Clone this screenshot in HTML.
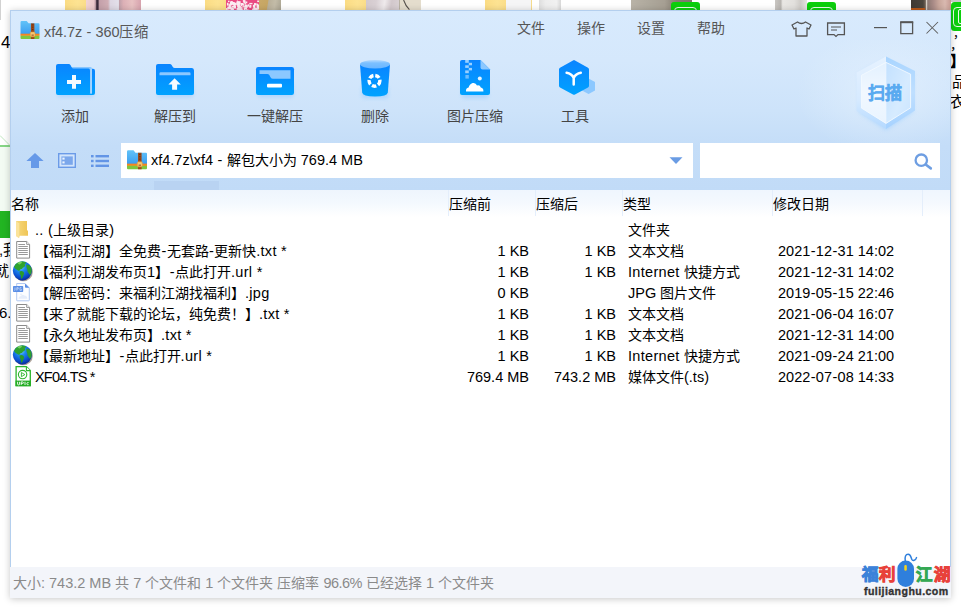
<!DOCTYPE html>
<html lang="zh-CN">
<head>
<meta charset="utf-8">
<title>xf4.7z - 360压缩</title>
<style>
*{box-sizing:border-box;margin:0;padding:0}
html,body{width:961px;height:607px;overflow:hidden;background:#fff}
body{position:relative;font-family:"Liberation Sans",sans-serif;font-size:14px;color:#000}
.abs,.t{position:absolute}
.t{white-space:nowrap;line-height:20px;height:20px}
.c{display:inline-block;white-space:nowrap;vertical-align:baseline;text-align:justify;text-align-last:justify;text-justify:inter-character}
.a{font-size:14.5px}
.h{display:inline-block;width:5.6px;text-align:center}
.n .a{letter-spacing:.3px}
.n .h{letter-spacing:0}
.x .a{letter-spacing:-.8px}
.r{text-align:right}
#win{position:absolute;left:10px;top:10px;width:941px;height:588px;background:linear-gradient(#d8eafd 0,#d5e8fc 50px,#cde3fa 100px,#c4ddf8 135px,#c1dbf7 180px);background-size:100% 180px;background-repeat:no-repeat;background-color:#c1dbf7;border:1px solid #b4cfee;box-shadow:0 1px 7px rgba(0,0,0,.22)}
</style>
</head>
<body>

<!-- desktop background fragments -->
<div class="abs" style="left:0px;top:0px;width:1px;height:20px;background:#d2d2d2;"></div>
<div class="abs" style="left:65px;top:0px;width:21px;height:9.6px;background:linear-gradient(90deg,#fbdc84,#fde392 60%,#fbdd88);"></div>
<div class="abs" style="left:205px;top:0px;width:21px;height:9.6px;background:linear-gradient(90deg,#fbdc84,#fde392 60%,#fbdd88);"></div>
<div class="abs" style="left:345px;top:0px;width:21px;height:9.6px;background:linear-gradient(90deg,#fbdc84,#fde392 60%,#fbdd88);"></div>
<div class="abs" style="left:485px;top:0px;width:21px;height:9.6px;background:linear-gradient(90deg,#fbdc84,#fde392 60%,#fbdd88);"></div>
<div class="abs" style="left:86px;top:0px;width:55px;height:9.6px;background:linear-gradient(90deg,#f1d3d3 0,#ecc9cc 14%,#c9a5ae 17%,#3d2c3c 19.5%,#3d2c3c 22%,#c4a0aa 24%,#d0aeb5 40%,#ddd6e2 44%,#e3e0ea 59%,#bfa0aa 60.5%,#dcb0b6 68%,#e8c2c3 84%,#d7a3ae 100%);"></div>
<div class="abs" style="left:226px;top:0px;width:33px;height:9.6px;background:#ea4a82;"></div>
<svg class="abs" style="left:226px;top:0" width="33" height="9.6" viewBox="226 0 33 9.6"><g fill="#fff" opacity=".9"><rect x="236.4" y="1.5" width="2.4" height="1.2"/><rect x="243.1" y="3.7" width="1.1" height="2.1"/><rect x="227.2" y="4.3" width="1.2" height="1.2"/><rect x="239.6" y="8.3" width="1.3" height="1.5"/><rect x="246.1" y="9.5" width="2.3" height="1.9"/><rect x="257.2" y="0.5" width="2.9" height="1.6"/><rect x="230.6" y="1.2" width="1.7" height="2.8"/><rect x="231.8" y="5.8" width="2.4" height="1.8"/><rect x="243.5" y="0.6" width="1.1" height="1.5"/><rect x="247.8" y="4.3" width="1.7" height="2.3"/><rect x="240.5" y="3.0" width="2.7" height="2.5"/><rect x="233.8" y="5.7" width="2.2" height="2.9"/><rect x="249.3" y="2.9" width="3.2" height="1.3"/><rect x="239.4" y="7.6" width="1.3" height="2.1"/><rect x="227.3" y="6.7" width="2.7" height="2.3"/><rect x="254.0" y="3.1" width="2.5" height="2.3"/><rect x="244.6" y="4.6" width="2.8" height="3.1"/><rect x="241.2" y="6.6" width="1.1" height="2.5"/><rect x="246.7" y="9.9" width="2.8" height="1.6"/><rect x="238.3" y="6.7" width="1.0" height="2.0"/><rect x="231.4" y="1.2" width="1.1" height="2.7"/><rect x="230.1" y="2.5" width="1.9" height="2.9"/><rect x="228.6" y="4.5" width="2.2" height="2.9"/><rect x="252.2" y="8.6" width="1.6" height="1.9"/><rect x="237.5" y="8.8" width="3.1" height="1.3"/><rect x="231.6" y="2.3" width="1.5" height="2.1"/><rect x="244.9" y="2.6" width="1.0" height="1.9"/><rect x="237.8" y="5.7" width="3.1" height="2.5"/><rect x="242.5" y="6.2" width="2.5" height="1.1"/><rect x="254.8" y="7.8" width="2.9" height="2.8"/><rect x="238.6" y="4.0" width="1.2" height="2.4"/><rect x="228.0" y="0.7" width="1.5" height="1.4"/><rect x="236.9" y="0.5" width="1.0" height="1.3"/><rect x="229.2" y="3.6" width="1.1" height="2.9"/><rect x="245.7" y="1.5" width="1.6" height="1.8"/><rect x="237.7" y="1.2" width="2.9" height="3.2"/><rect x="240.9" y="4.8" width="1.2" height="1.2"/><rect x="237.0" y="2.6" width="2.8" height="1.4"/><rect x="226.7" y="9.5" width="2.2" height="1.3"/><rect x="243.4" y="0.3" width="2.2" height="3.2"/><rect x="253.6" y="7.0" width="1.6" height="1.8"/><rect x="231.3" y="7.7" width="2.2" height="2.7"/><rect x="236.5" y="2.2" width="2.8" height="3.2"/><rect x="253.3" y="8.1" width="2.8" height="2.6"/><rect x="233.3" y="5.2" width="1.8" height="1.1"/><rect x="226.9" y="2.8" width="1.6" height="2.5"/><rect x="256.6" y="4.5" width="3.1" height="3.2"/><rect x="256.6" y="3.6" width="1.5" height="1.5"/><rect x="232.3" y="2.0" width="2.4" height="3.0"/><rect x="252.9" y="4.8" width="2.4" height="2.8"/><rect x="228.7" y="6.6" width="3.0" height="2.7"/><rect x="250.0" y="4.8" width="1.4" height="2.7"/><rect x="236.6" y="8.0" width="3.1" height="1.9"/><rect x="238.8" y="9.5" width="2.6" height="1.4"/><rect x="230.1" y="1.5" width="3.0" height="2.8"/><rect x="230.7" y="8.3" width="3.2" height="2.4"/><rect x="237.2" y="5.5" width="1.3" height="1.0"/><rect x="257.1" y="6.5" width="2.2" height="3.1"/><rect x="239.9" y="8.7" width="2.8" height="1.5"/><rect x="234.1" y="2.9" width="1.5" height="2.3"/><rect x="234.3" y="4.2" width="1.3" height="3.0"/><rect x="237.3" y="4.6" width="2.3" height="3.0"/><rect x="239.5" y="9.2" width="2.1" height="2.2"/><rect x="242.8" y="0.2" width="2.0" height="1.4"/><rect x="226.1" y="8.0" width="1.4" height="2.0"/><rect x="249.2" y="5.6" width="1.7" height="2.1"/><rect x="243.8" y="7.8" width="1.2" height="2.2"/><rect x="234.0" y="2.8" width="2.7" height="2.1"/><rect x="244.0" y="7.6" width="3.0" height="2.0"/><rect x="245.6" y="5.1" width="2.1" height="2.5"/></g></svg>
<div class="abs" style="left:259px;top:0px;width:22px;height:9.6px;background:linear-gradient(100deg,#c9a968 0,#c7a663 38%,#b9b09a 42%,#c3bca8 70%,#aaa492 100%);"></div>
<div class="abs" style="left:366px;top:0px;width:33px;height:9.6px;background:linear-gradient(100deg,#d3c9cd 0,#d9d0d4 30%,#efeaec 55%,#d2c8cc 75%,#dad2d5 100%);"></div>
<div class="abs" style="left:399px;top:0px;width:22px;height:9.6px;background:#e4ddcd;"></div>
<svg class="abs" style="left:399px;top:0" width="22" height="9.6" viewBox="399 0 22 9.6"><path d="M403.6 0 Q405.6 6 409.4 9.6" stroke="#55504c" stroke-width="1.1" fill="none"/><rect x="399" y="0" width="1" height="9.6" fill="#b9b2a4"/></svg>
<div class="abs" style="left:506px;top:0px;width:25px;height:9.6px;background:#f5f5f6;"></div>
<div class="abs" style="left:531px;top:0px;width:1px;height:9.6px;background:#f6dc8e;"></div>
<div class="abs" style="left:539px;top:0px;width:21.5px;height:9.6px;background:linear-gradient(90deg,#dedede,#ededed 30%,#f1f1f1 80%,#d8d8d8);"></div>
<div class="abs" style="left:631px;top:0px;width:61px;height:9.6px;background:linear-gradient(90deg,#b9b3a7 0,#aea89c 30%,#a69f93 55%,#857d72 75%,#7d756b 100%);"></div>
<div class="abs" style="left:671px;top:2px;width:29px;height:10px;background:#0ccf0c;border-radius:3px 3px 0 0"></div>
<div class="abs" style="left:674px;top:7px;width:23px;height:8px;background:transparent;border:1.4px solid #e9fbe9;border-radius:4px"></div>
<div class="abs" style="left:775px;top:0px;width:32px;height:9.6px;background:linear-gradient(90deg,#c9c6c2 0,#b9b6b2 18%,#e9e7e4 24%,#e2e0dd 60%,#cfccc8 80%,#e6e4e2 100%);"></div>
<div class="abs" style="left:807px;top:2px;width:29px;height:10px;background:#0ccf0c;border-radius:3px 3px 0 0"></div>
<div class="abs" style="left:810px;top:7px;width:23px;height:8px;background:transparent;border:1.4px solid #e9fbe9;border-radius:4px"></div>
<div class="abs" style="left:911px;top:0px;width:40px;height:9.6px;background:linear-gradient(90deg,#3f3a34 0,#4a443c 30%,#6f6256 36%,#e9e2d8 38%,#8d7a74 42%,#a88a86 55%,#c9a79c 70%,#d9b9b0 85%,#c59a92 100%);"></div>
<div class="abs" style="left:911px;top:7.6px;width:14px;height:2px;background:#b8581a;"></div>
<div class="abs" style="left:951px;top:0px;width:10px;height:2px;background:#c8c8c8;"></div>
<div class="abs" style="left:951px;top:2px;width:14px;height:29px;background:#0ccf0c;border-radius:3.5px"></div>
<div class="abs" style="left:953px;top:6.5px;width:14px;height:20px;background:transparent;border:1.6px solid #e9fbe9;border-radius:4px"></div>
<div class="abs" style="left:958px;top:9px;width:8px;height:15px;background:transparent;border:1.4px solid #e9fbe9;border-radius:2px"></div>
<div class="abs" style="left:0px;top:145px;width:10px;height:1.6px;background:#86d686;"></div>
<div class="abs" style="left:0px;top:146.6px;width:10px;height:65px;background:#f3fbf3;"></div>
<svg class="abs" style="left:0;top:130px" width="10" height="16" viewBox="0 0 10 16"><path d="M0 5.5 L10 15.5" stroke="#bfe6bf" stroke-width="1" fill="none"/></svg>
<div class="abs" style="left:0px;top:211px;width:10px;height:27px;background:#22b522;"></div>
<div class="t" style="left:1px;top:33px;font-size:17px;">4</div>
<div class="t" style="left:-1px;top:240px;font-size:15px;">,我</div>
<div class="t" style="left:-6px;top:261px;font-size:15px;">就</div>
<div class="t" style="left:-1px;top:303px;font-size:15px;">6.</div>
<div class="t" style="left:950px;top:35px;font-size:13px;">，</div>
<div class="t" style="left:953px;top:24px;font-size:12px;">，</div>
<div class="t" style="left:950px;top:52px;font-size:15px;font-weight:bold">】</div>
<div class="t" style="left:951.5px;top:72px;font-size:15px;">品</div>
<div class="t" style="left:950px;top:92px;font-size:15px;">衣</div>
<div id="win"></div>
<svg class="abs" style="left:20px;top:21px" width="20" height="18" viewBox="0 0 20 19"><defs><linearGradient id="zf20" x1="0" y1="0" x2="0" y2="1"><stop offset="0" stop-color="#62c3f8"/><stop offset="1" stop-color="#3a9df0"/></linearGradient></defs><path d="M0 1.2 Q0 0 1.2 0 H6.5 L8.5 2.5 H19 Q20 2.5 20 3.5 V14 H0 Z" fill="url(#zf20)"/><rect x="0" y="13.4" width="20" height="2.3" fill="#f5861f"/><path d="M0 15.6 H20 V18 Q20 19 19 19 H1 Q0 19 0 18 Z" fill="#7ec63f"/><rect x="11" y="2.5" width="3.6" height="16.5" fill="#9a4a1c"/><rect x="12" y="3.6" width="1.6" height="1" fill="#6d2f0d"/><rect x="12" y="6" width="1.6" height="1" fill="#6d2f0d"/><rect x="12" y="8.4" width="1.6" height="1" fill="#6d2f0d"/><rect x="10.3" y="11.6" width="5" height="5" rx="1" fill="#f7c873" stroke="#e39a35" stroke-width=".6"/><rect x="11.6" y="14.4" width="2.4" height="1" fill="#8a4a1c"/></svg>
<div class="t" style="left:44px;top:21px;color:#585858;font-size:14.4px;line-height:22px;height:22px;letter-spacing:-.1px"><span class="a">xf4.7z <span class="h">-</span> 360</span><span class="c" style="width:28.8px">压缩</span></div>
<div class="t" style="left:517px;top:18px;color:#555"><span class="c" style="width:28px">文件</span></div>
<div class="t" style="left:577px;top:18px;color:#555"><span class="c" style="width:28px">操作</span></div>
<div class="t" style="left:637px;top:18px;color:#555"><span class="c" style="width:28px">设置</span></div>
<div class="t" style="left:697px;top:18px;color:#555"><span class="c" style="width:28px">帮助</span></div>
<svg class="abs" style="left:788px;top:18px" width="156" height="22" viewBox="788 18 156 22" fill="none" stroke="#555" stroke-width="1.3"><path d="M797.5 22 L792 25 L794 29 L796 28 V36 H807 V28 L809 29 L811 25 L805.5 22 Q801.5 25 797.5 22 Z" stroke-linejoin="round"/><path d="M827.6 23 H844.4 V34.6 H838 L836 36.4 L834 34.6 H827.6 Z"/><path d="M831 27 H841 M831 30 H837" stroke-width="1.1"/><path d="M874 27.6 H887" stroke-width="1.2"/><path d="M900.8 22.4 H912.6 V33.6 H900.8 Z"/><path d="M900.2 22.2 H913.2" stroke-width="2"/><path d="M926.5 22 L938 33.5 M938 22 L926.5 33.5" stroke-width="1.05" stroke="#5e5e5e"/></svg>
<svg width="0" height="0" style="position:absolute"><defs><linearGradient id="gb" x1="0" y1="0" x2="0" y2="1"><stop offset="0" stop-color="#0a84ff"/><stop offset="1" stop-color="#00a2ff"/></linearGradient><linearGradient id="gb2" x1="0" y1="0" x2="0" y2="1"><stop offset="0" stop-color="#1a8cff"/><stop offset="1" stop-color="#0aa5ff"/></linearGradient><linearGradient id="gh" x1="0" y1="0" x2="1" y2="0"><stop offset="0" stop-color="#e9f4ff"/><stop offset=".5" stop-color="#f4faff"/><stop offset=".5" stop-color="#d3eaff"/><stop offset="1" stop-color="#c4e2ff"/></linearGradient><filter id="sh" x="-20%" y="-20%" width="140%" height="160%"><feGaussianBlur stdDeviation="2"/></filter></defs></svg>
<svg class="abs" style="left:50px;top:56px" width="52" height="50" viewBox="50 56 52 50"><rect x="58" y="84" width="35" height="13" fill="#7fbfff" opacity=".45" filter="url(#sh)"/><path d="M88 68.7 H93 Q95 68.7 95 70.7 V93 Q95 95 93 95 H88 Z" fill="url(#gb)"/><path d="M70 67 H90.2 Q92 67 92 68.8 V93.4 H70 Z" fill="#86c5ff"/><path d="M90.4 68.6 H91.9 V93.4 H90.4 Z" fill="#a9d7ff"/><path d="M56 66 Q56 64 58 64 H68.5 Q70 64 70.6 65.3 L71.6 67.2 Q72.2 68.4 73.6 68.4 H88.5 Q90 68.4 90 70.4 V93 Q90 95 88 95 H58 Q56 95 56 93 Z" fill="url(#gb)"/><path d="M67 82 H81 M74 75 V88.8" stroke="#f4faff" stroke-width="4"/></svg>
<svg class="abs" style="left:150px;top:56px" width="52" height="50" viewBox="150 56 52 50"><rect x="158" y="84" width="35" height="13" fill="#7fbfff" opacity=".45" filter="url(#sh)"/><path d="M156 66 Q156 64 158 64 H169.6 Q171.2 64 171.8 65.2 L172.8 66.9 Q173.4 68 174.8 68 H192 Q194 68.4 194 70.4 V93 Q194 95 192 95 H158 Q156 95 156 93 Z" fill="url(#gb)"/><path d="M159.5 75.3 V73.4 Q159.5 72.2 160.7 72.2 H189.3 Q190.5 72.2 190.5 73.4 V75.3 Z" fill="#8cc8ff"/><path d="M174.6 78.2 L180.8 84.6 H177.1 V89.8 H172.1 V84.6 H168.4 Z" fill="#f6fbff"/></svg>
<svg class="abs" style="left:250px;top:56px" width="52" height="50" viewBox="250 56 52 50"><rect x="258" y="84" width="35" height="13" fill="#7fbfff" opacity=".45" filter="url(#sh)"/><rect x="256" y="67" width="38" height="28" rx="2.2" fill="url(#gb)"/><path d="M259.5 70.3 H290.5 V78.8 H273 Q271.3 78.8 270.5 77.3 L269.3 75.1 Q268.6 74 267.2 74 H259.5 Z" fill="#8cc8ff"/><rect x="267" y="83.8" width="15" height="3.8" rx="1" fill="#fff"/></svg>
<svg class="abs" style="left:350px;top:54px" width="52" height="52" viewBox="350 54 52 52"><defs><linearGradient id="tr" x1="0" y1="0" x2="0" y2="1"><stop offset="0" stop-color="#a6d4ff" stop-opacity=".7"/><stop offset=".35" stop-color="#7cc0ff"/><stop offset="1" stop-color="#6ab6ff"/></linearGradient></defs><rect x="362" y="86" width="26" height="12" fill="#7fbfff" opacity=".45" filter="url(#sh)"/><path d="M360 64.4 L362.2 92.4 Q362.6 96.4 375 96.4 Q387.4 96.4 387.8 92.4 L390 64.4 Z" fill="url(#gb)"/><ellipse cx="375" cy="64.2" rx="15" ry="4.2" fill="url(#tr)"/><g fill="none" stroke="#fff" stroke-width="3.4" stroke-dasharray="4.5 1.9"><circle cx="374.5" cy="80.8" r="5.4"/></g></svg>
<svg class="abs" style="left:450px;top:54px" width="52" height="52" viewBox="450 54 52 52"><rect x="462" y="86" width="26" height="12" fill="#7fbfff" opacity=".45" filter="url(#sh)"/><path d="M460 62 Q460 60 462 60 H480.5 L490 69.5 V93 Q490 95 488 95 H462 Q460 95 460 93 Z" fill="url(#gb)"/><path d="M480.5 60 L490 69.5 H482.5 Q480.5 69.5 480.5 67.5 Z" fill="#8cc8ff"/><g fill="#9ad0ff"><rect x="465.2" y="60" width="3.6" height="2.8"/><rect x="468.8" y="62.8" width="3.2" height="2.5"/><rect x="465.2" y="65.3" width="3.6" height="2.6"/><rect x="468.8" y="67.9" width="3.2" height="2.5"/><rect x="465.2" y="70.4" width="3.6" height="2.8"/><rect x="465.4" y="75" width="3.4" height="3.6" opacity=".7"/></g><circle cx="479.8" cy="78.6" r="2" fill="#e6f4ff"/><path d="M466 91.5 Q465.6 88.2 468.6 87.6 Q469.4 84 472.6 83 Q475.8 82.4 477 85.4 Q480 84.6 480.8 87.6 Q483.6 88 483.4 91.5 Z" fill="#fff"/></svg>
<svg class="abs" style="left:550px;top:54px" width="52" height="52" viewBox="550 54 52 52"><path d="M588.6 78.4 L595 82 V90.4 L588.6 94 L582 90.4 Z" fill="#8cc8ff"/><path d="M573 60.4 Q574 59.8 575 60.4 L588 67.8 Q589 68.4 589 69.6 V85.7 Q589 86.9 588 87.5 L575 94.4 Q574 95 573 94.4 L560 87.5 Q559 86.9 559 85.7 V69.6 Q559 68.4 560 67.8 Z" fill="url(#gb)"/><path d="M566.6 72.8 Q571.6 73.8 573.7 77.8 Q575.8 73.8 580.8 72.8 M573.7 77 V84.4" fill="none" stroke="#fff" stroke-width="2.5" stroke-linecap="round"/></svg>
<div class="t" style="left:61px;top:106px;color:#444"><span class="c" style="width:28px">添加</span></div>
<div class="t" style="left:154px;top:106px;color:#444"><span class="c" style="width:42px">解压到</span></div>
<div class="t" style="left:247px;top:106px;color:#444"><span class="c" style="width:56px">一键解压</span></div>
<div class="t" style="left:361px;top:106px;color:#444"><span class="c" style="width:28px">删除</span></div>
<div class="t" style="left:447px;top:106px;color:#444"><span class="c" style="width:56px">图片压缩</span></div>
<div class="t" style="left:561px;top:106px;color:#444"><span class="c" style="width:28px">工具</span></div>
<div class="abs" style="left:786px;top:40px;width:164px;height:110px;background:radial-gradient(ellipse 90px 62px at 100px 53px,rgba(235,245,255,.55),rgba(235,245,255,0));"></div>
<svg class="abs" style="left:846px;top:48px" width="80" height="92" viewBox="846 48 80 92"><defs><linearGradient id="hl" x1="0" y1="0" x2="0" y2="1"><stop offset="0" stop-color="#e6f2ff"/><stop offset=".6" stop-color="#d6eaff"/><stop offset="1" stop-color="#b4d9ff"/></linearGradient><linearGradient id="hr" x1="0" y1="0" x2="0" y2="1"><stop offset="0" stop-color="#a9d5ff"/><stop offset=".5" stop-color="#bfdfff"/><stop offset="1" stop-color="#a6d2ff"/></linearGradient><linearGradient id="il" x1="0" y1="0" x2="0" y2="1"><stop offset="0" stop-color="#e3f1ff"/><stop offset=".5" stop-color="#f1f8ff"/><stop offset="1" stop-color="#e9f4ff"/></linearGradient><linearGradient id="ir" x1="0" y1="0" x2="1" y2="1"><stop offset="0" stop-color="#c3e1ff"/><stop offset=".6" stop-color="#d6ebff"/><stop offset="1" stop-color="#c9e4ff"/></linearGradient></defs><path d="M886 60 L913 74 V112 L886 130 L859 112 V74 Z" fill="#8cc6ff" opacity=".5" filter="url(#sh)"/><path d="M886 56.6 L856.6 72.6 V110.8 L886 129 Z" fill="url(#hl)"/><path d="M886 56.6 L915 71 V110.4 L886 129 Z" fill="url(#hr)"/><path d="M886 62.4 L861.4 75.4 V108 L886 123.4 Z" fill="url(#il)"/><path d="M886 62.4 L910.6 74.2 V107.8 L886 123.4 Z" fill="url(#ir)"/><path d="M886 62.4 L910.6 74.2 V107.8 L886 123.4 L861.4 108 V75.4 Z" fill="none" stroke="#f3f9ff" stroke-width=".9"/><path d="M886 62.4 V123.4" stroke="#eef7ff" stroke-width=".6"/></svg>
<div class="t" style="left:868px;top:83px;color:#5aaaf0;font-size:17px;font-weight:bold;line-height:22px;height:22px;-webkit-text-stroke:.4px #5aaaf0">扫描</div>
<div class="abs" style="left:154px;top:181px;width:65px;height:9px;background:#b9d3f2;"></div>
<svg class="abs" style="left:24px;top:150px" width="90" height="20" viewBox="24 150 90 20"><path d="M35 153 L43.6 161 H39 V168 H31 V161 H26.4 Z" fill="#6699e8"/><rect x="58.7" y="153.7" width="16.6" height="13.6" fill="#d3e5fb" stroke="#6b9be8" stroke-width="1.4"/><rect x="61.4" y="156.4" width="11.4" height="8.4" fill="#7ba7eb"/><rect x="62.4" y="157.6" width="2.2" height="2" fill="#eef5ff"/><rect x="62.4" y="161.4" width="2.2" height="2" fill="#eef5ff"/><g fill="#6395e6"><rect x="91" y="155" width="2.6" height="2.4"/><rect x="95.5" y="155" width="13.5" height="2.4"/><rect x="91" y="159.8" width="2.6" height="2.4"/><rect x="95.5" y="159.8" width="13.5" height="2.4"/><rect x="91" y="164.6" width="2.6" height="2.4"/><rect x="95.5" y="164.6" width="13.5" height="2.4"/></g></svg>
<div class="abs" style="left:121px;top:142.5px;width:572px;height:35.5px;background:#fff;"></div>
<div class="abs" style="left:700px;top:142.5px;width:240px;height:35.5px;background:#fff;"></div>
<svg class="abs" style="left:127px;top:150px" width="20" height="19.5" viewBox="0 0 20 19"><defs><linearGradient id="zf127" x1="0" y1="0" x2="0" y2="1"><stop offset="0" stop-color="#62c3f8"/><stop offset="1" stop-color="#3a9df0"/></linearGradient></defs><path d="M0 1.2 Q0 0 1.2 0 H6.5 L8.5 2.5 H19 Q20 2.5 20 3.5 V14 H0 Z" fill="url(#zf127)"/><rect x="0" y="13.4" width="20" height="2.3" fill="#f5861f"/><path d="M0 15.6 H20 V18 Q20 19 19 19 H1 Q0 19 0 18 Z" fill="#7ec63f"/><rect x="11" y="2.5" width="3.6" height="16.5" fill="#9a4a1c"/><rect x="12" y="3.6" width="1.6" height="1" fill="#6d2f0d"/><rect x="12" y="6" width="1.6" height="1" fill="#6d2f0d"/><rect x="12" y="8.4" width="1.6" height="1" fill="#6d2f0d"/><rect x="10.3" y="11.6" width="5" height="5" rx="1" fill="#f7c873" stroke="#e39a35" stroke-width=".6"/><rect x="11.6" y="14.4" width="2.4" height="1" fill="#8a4a1c"/></svg>
<div class="t" style="left:151px;top:149px;line-height:22px;height:22px;font-size:14px"><span class="a">xf4.7z\xf4 <span class="h">-</span> </span><span class="c" style="width:70px">解包大小为</span><span class="a"> 769.4 MB</span></div>
<svg class="abs" style="left:668px;top:155px" width="16" height="10" viewBox="668 155 16 10"><path d="M669.5 157.2 H682.5 L676 164 Z" fill="#6a9ce4"/></svg>
<svg class="abs" style="left:912px;top:150px" width="22" height="22" viewBox="912 150 22 22" fill="none" stroke="#6e9ee2"><circle cx="921.3" cy="160.2" r="5.7" stroke-width="2.3"/><path d="M926 164.8 L930.8 168.4" stroke-width="2.6" stroke-linecap="round"/></svg>
<div class="abs" style="left:11px;top:190px;width:939px;height:377px;background:#fff;"></div>
<div class="abs" style="left:11px;top:190px;width:939px;height:27px;background:linear-gradient(#eff6fe,#f5f9fe 50%,#fff);"></div>
<div class="abs" style="left:11px;top:190px;width:437px;height:27px;background:linear-gradient(#eef5fd,#f4f9fe 50%,#fff);"></div>
<div class="abs" style="left:448px;top:190px;width:1px;height:26px;background:#e4eefb;"></div>
<div class="abs" style="left:535px;top:190px;width:1px;height:26px;background:#e4eefb;"></div>
<div class="abs" style="left:622px;top:190px;width:1px;height:26px;background:#e4eefb;"></div>
<div class="abs" style="left:772px;top:190px;width:1px;height:26px;background:#e4eefb;"></div>
<div class="abs" style="left:922px;top:190px;width:1px;height:26px;background:#e4eefb;"></div>
<div class="t" style="left:11px;top:194px"><span class="c" style="width:28px">名称</span></div>
<div class="t" style="left:449px;top:194px"><span class="c" style="width:42px">压缩前</span></div>
<div class="t" style="left:536px;top:194px"><span class="c" style="width:42px">压缩后</span></div>
<div class="t" style="left:622.5px;top:194px"><span class="c" style="width:28px">类型</span></div>
<div class="t" style="left:772.5px;top:194px"><span class="c" style="width:56px">修改日期</span></div>
<svg class="abs" style="left:14px;top:219px" width="16" height="20" viewBox="14 240 16 20"><defs><linearGradient id="fo" x1="0" y1="0" x2="1" y2="0"><stop offset="0" stop-color="#f7d97e"/><stop offset="1" stop-color="#efc556"/></linearGradient></defs><path d="M16 242 H27 V251.6 H28 V256.7 H16 Z" fill="url(#fo)"/><path d="M16 242 L19.5 244.6 V256.6 L18.8 259 L16 257.2 Z" fill="#fbe39a"/><path d="M19.5 244.6 V256.6 L18.8 259" fill="none" stroke="#f3d47a" stroke-width=".5"/></svg>
<div class="t n" style="left:35px;top:220px"><span class="a">.. (</span><span class="c" style="width:56px">上级目录</span><span class="a">)</span></div>
<div class="t" style="left:628px;top:220px"><span class="c" style="width:42px">文件夹</span></div>
<svg class="abs" style="left:15px;top:240px" width="17" height="20" viewBox="15 240 17 20"><path d="M16.7 241.5 H26.7 L29.6 244.4 V258.1 H16.7 Z" fill="#fff" stroke="#8a8a8a" stroke-width="1"/><path d="M26.7 241.5 V244.4 H29.6" fill="#fff" stroke="#8a8a8a" stroke-width=".9"/><path d="M18.3 244.5 H25 M18.3 246.5 H27.8 M18.3 248.5 H27.8 M18.3 250.5 H27.8 M18.3 252.5 H27.8 M18.3 254.5 H27.8" stroke="#999" stroke-width="1"/></svg>
<div class="t n" style="left:35px;top:241px"><span class="c" style="width:126px">【福利江湖】全免费</span><span class="a"><span class="h">-</span></span><span class="c" style="width:42px">无套路</span><span class="a"><span class="h">-</span></span><span class="c" style="width:42px">更新快</span><span class="a">.txt *</span></div>
<div class="t r" style="left:429px;width:100px;top:241px"><span class="a">1 KB</span></div>
<div class="t r" style="left:516px;width:100px;top:241px"><span class="a">1 KB</span></div>
<div class="t" style="left:628px;top:241px"><span class="c" style="width:56px">文本文档</span></div>
<div class="t" style="left:778px;top:241px"><span class="a">2021<span class="h">-</span>12<span class="h">-</span>31 14:02</span></div>
<svg class="abs" style="left:12px;top:260px" width="22" height="22" viewBox="12 239 22 22"><defs><radialGradient id="g271" cx=".42" cy=".3" r=".75"><stop offset="0" stop-color="#7fd0ff"/><stop offset=".3" stop-color="#1f8df0"/><stop offset=".7" stop-color="#0b4fd0"/><stop offset="1" stop-color="#0a2a8c"/></radialGradient><clipPath id="cg271"><circle cx="22.4" cy="249.8" r="9.6"/></clipPath></defs><ellipse cx="23.4" cy="251" rx="9.4" ry="9.3" fill="#6b5a4a" opacity=".55"/><circle cx="22.4" cy="249.8" r="9.6" fill="url(#g271)"/><g clip-path="url(#cg271)"><path d="M14 246 Q15 242 19 240.4 Q22 239.6 25.6 240.6 Q26.4 242.4 24.6 243.4 Q25.8 244.8 24.2 246 Q22.6 246.4 22 248 Q20.4 247.6 19.6 249.4 Q18.4 250.4 17.4 249 Q15.6 248.6 14 246 Z" fill="#2fa32f"/><path d="M17 241.6 Q19.6 240.2 22.6 240.6 Q21.6 242.6 19.6 243.4 Q18 243.6 17 241.6 Z" fill="#7fd86a" opacity=".85"/><path d="M19.6 250.4 Q21.6 249.6 23.4 250.8 Q24.8 252 23.6 254 Q22.8 256 21.8 258 Q20.6 256.6 20.8 254.4 Q19.4 252.4 19.6 250.4 Z" fill="#2a9a2a"/><path d="M26.6 243.6 Q29.6 243.6 31.4 246.6 Q32.4 249.6 31 253 Q29.4 254.4 28.6 252 Q27 250.6 27.4 248.4 Q25.8 246 26.6 243.6 Z" fill="#2f9f2f"/><path d="M14 256 Q22 262 31 255 L32 260 H13 Z" fill="#1a2fa8" opacity=".55"/></g></svg>
<div class="t n" style="left:35px;top:262px"><span class="c" style="width:112px">【福利江湖发布页</span><span class="a">1</span><span class="c" style="width:14px">】</span><span class="a"><span class="h">-</span></span><span class="c" style="width:56px">点此打开</span><span class="a">.url *</span></div>
<div class="t r" style="left:429px;width:100px;top:262px"><span class="a">1 KB</span></div>
<div class="t r" style="left:516px;width:100px;top:262px"><span class="a">1 KB</span></div>
<div class="t n" style="left:628px;top:262px"><span class="a">Internet </span><span class="c" style="width:56px">快捷方式</span></div>
<div class="t" style="left:778px;top:262px"><span class="a">2021<span class="h">-</span>12<span class="h">-</span>31 14:02</span></div>
<svg class="abs" style="left:12px;top:282px" width="19" height="20" viewBox="12 240 19 20"><path d="M16.7 241.5 H25 L29.3 245.8 V258.3 Q29.3 258.8 28.8 258.8 H17.2 Q16.7 258.8 16.7 258.3 Z" fill="#fcfdff" stroke="#a9c3f1" stroke-width=".9"/><path d="M25 241.5 L29.3 245.8 H25.8 Q25 245.8 25 245 Z" fill="#5b8fe6"/><path d="M18.4 256.8 Q18.6 254.2 21 254 Q22.4 251.8 24.4 253.6 Q27 253.6 27.4 256.8 Z" fill="#e6edfa"/><circle cx="21" cy="252.4" r=".8" fill="#e6edfa"/><rect x="13" y="244.1" width="10.2" height="5.8" rx=".7" fill="#5b8fe6"/><path d="M15 245.6 V248 Q15 248.6 14.4 248.4 M16.8 248.6 V245.6 H18.2 V247 H16.8 M21.4 245.6 H20 V248.4 H21.4 V247.2 H20.8" stroke="#c6dafa" stroke-width=".75" fill="none"/></svg>
<div class="t n" style="left:35px;top:283px"><span class="c" style="width:210px">【解压密码：来福利江湖找福利】</span><span class="a">.jpg</span></div>
<div class="t r" style="left:429px;width:100px;top:283px"><span class="a">0 KB</span></div>
<div class="t" style="left:628px;top:283px"><span class="a">JPG </span><span class="c" style="width:56px">图片文件</span></div>
<div class="t" style="left:778px;top:283px"><span class="a">2019<span class="h">-</span>05<span class="h">-</span>15 22:46</span></div>
<svg class="abs" style="left:15px;top:303px" width="17" height="20" viewBox="15 240 17 20"><path d="M16.7 241.5 H26.7 L29.6 244.4 V258.1 H16.7 Z" fill="#fff" stroke="#8a8a8a" stroke-width="1"/><path d="M26.7 241.5 V244.4 H29.6" fill="#fff" stroke="#8a8a8a" stroke-width=".9"/><path d="M18.3 244.5 H25 M18.3 246.5 H27.8 M18.3 248.5 H27.8 M18.3 250.5 H27.8 M18.3 252.5 H27.8 M18.3 254.5 H27.8" stroke="#999" stroke-width="1"/></svg>
<div class="t n" style="left:35px;top:304px"><span class="c" style="width:224px">【来了就能下载的论坛，纯免费！】</span><span class="a">.txt *</span></div>
<div class="t r" style="left:429px;width:100px;top:304px"><span class="a">1 KB</span></div>
<div class="t r" style="left:516px;width:100px;top:304px"><span class="a">1 KB</span></div>
<div class="t" style="left:628px;top:304px"><span class="c" style="width:56px">文本文档</span></div>
<div class="t" style="left:778px;top:304px"><span class="a">2021<span class="h">-</span>06<span class="h">-</span>04 16:07</span></div>
<svg class="abs" style="left:15px;top:324px" width="17" height="20" viewBox="15 240 17 20"><path d="M16.7 241.5 H26.7 L29.6 244.4 V258.1 H16.7 Z" fill="#fff" stroke="#8a8a8a" stroke-width="1"/><path d="M26.7 241.5 V244.4 H29.6" fill="#fff" stroke="#8a8a8a" stroke-width=".9"/><path d="M18.3 244.5 H25 M18.3 246.5 H27.8 M18.3 248.5 H27.8 M18.3 250.5 H27.8 M18.3 252.5 H27.8 M18.3 254.5 H27.8" stroke="#999" stroke-width="1"/></svg>
<div class="t n" style="left:35px;top:325px"><span class="c" style="width:126px">【永久地址发布页】</span><span class="a">.txt *</span></div>
<div class="t r" style="left:429px;width:100px;top:325px"><span class="a">1 KB</span></div>
<div class="t r" style="left:516px;width:100px;top:325px"><span class="a">1 KB</span></div>
<div class="t" style="left:628px;top:325px"><span class="c" style="width:56px">文本文档</span></div>
<div class="t" style="left:778px;top:325px"><span class="a">2021<span class="h">-</span>12<span class="h">-</span>31 14:00</span></div>
<svg class="abs" style="left:12px;top:344px" width="22" height="22" viewBox="12 239 22 22"><defs><radialGradient id="g355" cx=".42" cy=".3" r=".75"><stop offset="0" stop-color="#7fd0ff"/><stop offset=".3" stop-color="#1f8df0"/><stop offset=".7" stop-color="#0b4fd0"/><stop offset="1" stop-color="#0a2a8c"/></radialGradient><clipPath id="cg355"><circle cx="22.4" cy="249.8" r="9.6"/></clipPath></defs><ellipse cx="23.4" cy="251" rx="9.4" ry="9.3" fill="#6b5a4a" opacity=".55"/><circle cx="22.4" cy="249.8" r="9.6" fill="url(#g355)"/><g clip-path="url(#cg355)"><path d="M14 246 Q15 242 19 240.4 Q22 239.6 25.6 240.6 Q26.4 242.4 24.6 243.4 Q25.8 244.8 24.2 246 Q22.6 246.4 22 248 Q20.4 247.6 19.6 249.4 Q18.4 250.4 17.4 249 Q15.6 248.6 14 246 Z" fill="#2fa32f"/><path d="M17 241.6 Q19.6 240.2 22.6 240.6 Q21.6 242.6 19.6 243.4 Q18 243.6 17 241.6 Z" fill="#7fd86a" opacity=".85"/><path d="M19.6 250.4 Q21.6 249.6 23.4 250.8 Q24.8 252 23.6 254 Q22.8 256 21.8 258 Q20.6 256.6 20.8 254.4 Q19.4 252.4 19.6 250.4 Z" fill="#2a9a2a"/><path d="M26.6 243.6 Q29.6 243.6 31.4 246.6 Q32.4 249.6 31 253 Q29.4 254.4 28.6 252 Q27 250.6 27.4 248.4 Q25.8 246 26.6 243.6 Z" fill="#2f9f2f"/><path d="M14 256 Q22 262 31 255 L32 260 H13 Z" fill="#1a2fa8" opacity=".55"/></g></svg>
<div class="t n" style="left:35px;top:346px"><span class="c" style="width:84px">【最新地址】</span><span class="a"><span class="h">-</span></span><span class="c" style="width:56px">点此打开</span><span class="a">.url *</span></div>
<div class="t r" style="left:429px;width:100px;top:346px"><span class="a">1 KB</span></div>
<div class="t r" style="left:516px;width:100px;top:346px"><span class="a">1 KB</span></div>
<div class="t n" style="left:628px;top:346px"><span class="a">Internet </span><span class="c" style="width:56px">快捷方式</span></div>
<div class="t" style="left:778px;top:346px"><span class="a">2021<span class="h">-</span>09<span class="h">-</span>24 21:00</span></div>
<svg class="abs" style="left:14px;top:365px" width="19" height="23" viewBox="14 239 19 23"><path d="M16.1 240.7 H26.4 L30.3 244.6 V259.6 H16.1 Z" fill="#fff" stroke="#2db52d" stroke-width="1.3"/><path d="M26.4 240.7 V244.6 H30.3" fill="#fff" stroke="#2db52d" stroke-width="1.1"/><circle cx="22.6" cy="248.6" r="4.2" fill="none" stroke="#2db52d" stroke-width="1.1"/><path d="M21.4 246.5 L24.9 248.6 L21.4 250.7 Z" fill="none" stroke="#2db52d" stroke-width=".9" stroke-linejoin="round"/><rect x="15.5" y="254.6" width="15.4" height="5.6" fill="#25ad25"/><path d="M17.6 255.8 V258.2 Q17.6 258.9 18.6 258.9 Q19.6 258.9 19.6 258.2 V255.8 M21.2 259 V255.9 H22.6 Q23.4 255.9 23.4 256.7 Q23.4 257.5 22.6 257.5 H21.2 M25 255.7 V259 M28.6 256.6 Q27.8 256.2 27.2 256.8 Q26.6 257.6 27.2 258.5 Q27.8 259 28.6 258.6" stroke="#fff" stroke-width=".9" fill="none"/></svg>
<div class="t x" style="left:35px;top:367px"><span class="a">XF04.TS *</span></div>
<div class="t r" style="left:429px;width:100px;top:367px"><span class="a">769.4 MB</span></div>
<div class="t r" style="left:516px;width:100px;top:367px"><span class="a">743.2 MB</span></div>
<div class="t" style="left:628px;top:367px"><span class="c" style="width:56px">媒体文件</span><span class="a">(.ts)</span></div>
<div class="t" style="left:778px;top:367px"><span class="a">2022<span class="h">-</span>07<span class="h">-</span>08 14:33</span></div>
<div class="abs" style="left:10px;top:567px;width:941px;height:31px;background:#f3f5fa;"></div>
<div class="t" style="left:13px;top:573px;color:#8a8a8a;font-size:14px"><span class="c" style="width:28px">大小</span><span class="a">: 743.2 MB </span><span class="c" style="width:14px">共</span><span class="a"> 7 </span><span class="c" style="width:56px">个文件和</span><span class="a"> 1 </span><span class="c" style="width:56px">个文件夹</span><span class="a"> </span><span class="c" style="width:42px">压缩率</span><span class="a"> <span style="letter-spacing:-.55px">96.6%</span> </span><span class="c" style="width:56px">已经选择</span><span class="a"> 1 </span><span class="c" style="width:56px">个文件夹</span></div>
<div class="t" style="left:861.8px;top:562px;width:18px;font-size:16.4px;font-weight:900;line-height:24px;height:24px;color:#3b82d9;-webkit-text-stroke:.9px #3b82d9">福</div>
<div class="t" style="left:879.4px;top:562px;width:18px;font-size:16.4px;font-weight:900;line-height:24px;height:24px;color:#e8413a;-webkit-text-stroke:.9px #e8413a">利</div>
<div class="t" style="left:915.9px;top:562px;width:18px;font-size:16.4px;font-weight:900;line-height:24px;height:24px;color:#34a853;-webkit-text-stroke:.9px #34a853">江</div>
<div class="t" style="left:933.5px;top:562px;width:18px;font-size:16.4px;font-weight:900;line-height:24px;height:24px;color:#e8413a;-webkit-text-stroke:.9px #e8413a">湖</div>
<svg class="abs" style="left:892px;top:550px" width="30" height="40" viewBox="892 550 30 40"><path d="M905.3 561.5 C904.4 556.5 905.8 554.2 908.2 554.3 C910.7 554.5 910.9 557.3 911.7 559.2 C912.7 561.3 915.7 560.5 916.5 557.6" fill="none" stroke="#2f7fdc" stroke-width="1.5" stroke-linecap="round"/><rect x="897.4" y="560.6" width="16.6" height="26.4" rx="8.3" fill="#2f7fdc"/><rect x="904.3" y="564.9" width="2.5" height="5.8" rx="1.2" fill="#f5d21f"/></svg>
<div class="t" style="left:864px;top:582px;font-size:10.6px;font-weight:bold;color:#333;letter-spacing:.42px;line-height:18px;height:18px;-webkit-text-stroke:.35px #333">fulijianghu.com</div>
</body></html>
